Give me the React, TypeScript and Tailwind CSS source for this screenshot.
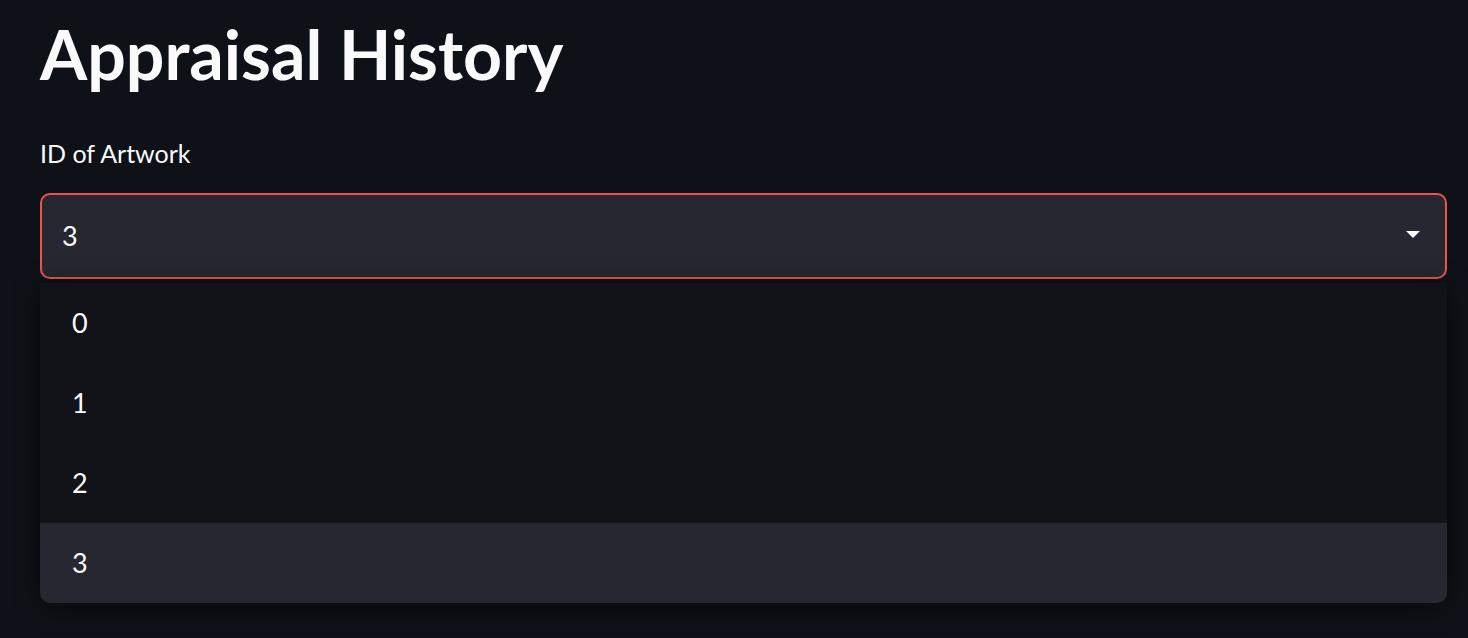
import React from 'react';

const options = ['0', '1', '2', '3'];

const App: React.FC = () => {
  const selected = '3';

  return (
    <div className="w-[1468px] h-[638px] overflow-hidden bg-[#0e1117] text-[#fafafa] font-['Lato','Open_Sans',sans-serif]">
      <div className="pl-10 pr-[21px] pt-[10px]">
        <h1 className="text-[68px] leading-[88px] font-bold text-[#fafafa]">Appraisal History</h1>

        <label className="block mt-[39px] text-[25px] leading-[32px] text-[#fafafa]">ID of Artwork</label>

        <div className="relative mt-[24px]">
          <div className="h-[86px] rounded-[10px] border-2 border-[#ef5350] bg-[#262730] flex items-center justify-between pl-[20px] pr-[25px]">
            <span className="text-[27px]">{selected}</span>
            <svg width="14" height="8" viewBox="0 0 14 8" className="mt-[-2px]">
              <path d="M0 0 L14 0 L7 7 Z" fill="#fafafa" />
            </svg>
          </div>

          <ul className="mt-[4px] rounded-b-[10px] overflow-hidden bg-[#111318] shadow-[0_4px_24px_rgba(0,0,0,0.5)]">
            {options.map((o) => (
              <li
                key={o}
                className={`h-[80px] flex items-center pl-[32px] text-[27px] ${o === selected ? 'bg-[#262730]' : ''}`}
              >
                {o}
              </li>
            ))}
          </ul>
        </div>
      </div>
    </div>
  );
};

export default App;
